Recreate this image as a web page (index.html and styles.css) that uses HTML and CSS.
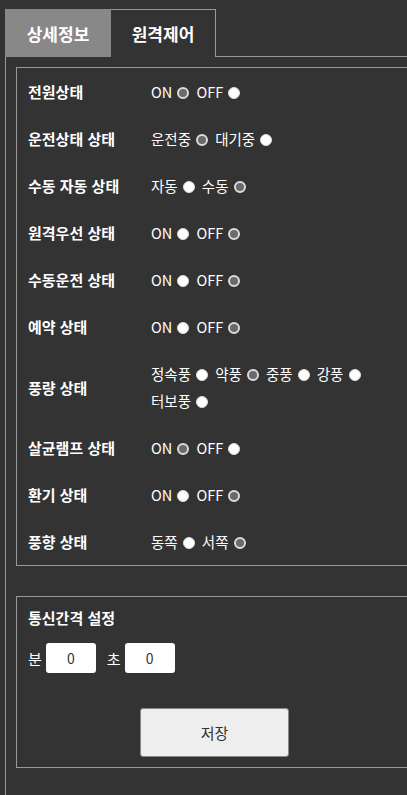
FILE: index.html
```html
<!DOCTYPE html>
<html lang="ko">
<head>
    <meta charset="UTF-8">
    <meta name="viewport" content="width=device-width, initial-scale=1.0">
    <title>원격제어</title>
    <link rel="stylesheet" href="styles.css">
</head>
<body>

<div id="tab-bar">
    <div class="tab">상세정보</div>
    <div class="tab active">원격제어</div>
    <div class="tab-rest"></div>
</div>

<div id="panel">
    <div class="box status-box">
        <div class="row">
            <div class="label">전원상태</div>
            <div class="value">
                <span class="opt">ON <input type="radio" name="power" checked></span>
                <span class="opt">OFF <input type="radio" name="power"></span>
            </div>
        </div>
        <div class="row">
            <div class="label">운전상태 상태</div>
            <div class="value">
                <span class="opt">운전중 <input type="radio" name="run" checked></span>
                <span class="opt">대기중 <input type="radio" name="run"></span>
            </div>
        </div>
        <div class="row">
            <div class="label">수동 자동 상태</div>
            <div class="value">
                <span class="opt">자동 <input type="radio" name="mode"></span>
                <span class="opt">수동 <input type="radio" name="mode" checked></span>
            </div>
        </div>
        <div class="row">
            <div class="label">원격우선 상태</div>
            <div class="value">
                <span class="opt">ON <input type="radio" name="remote"></span>
                <span class="opt">OFF <input type="radio" name="remote" checked></span>
            </div>
        </div>
        <div class="row">
            <div class="label">수동운전 상태</div>
            <div class="value">
                <span class="opt">ON <input type="radio" name="manual"></span>
                <span class="opt">OFF <input type="radio" name="manual" checked></span>
            </div>
        </div>
        <div class="row">
            <div class="label">예약 상태</div>
            <div class="value">
                <span class="opt">ON <input type="radio" name="reserve"></span>
                <span class="opt">OFF <input type="radio" name="reserve" checked></span>
            </div>
        </div>
        <div class="row">
            <div class="label">풍량 상태</div>
            <div class="value">
                <span class="opt">정속풍 <input type="radio" name="wind"></span>
                <span class="opt">약풍 <input type="radio" name="wind" checked></span>
                <span class="opt">중풍 <input type="radio" name="wind"></span>
                <span class="opt">강풍 <input type="radio" name="wind"></span>
                <span class="opt">터보풍 <input type="radio" name="wind"></span>
            </div>
        </div>
        <div class="row">
            <div class="label">살균램프 상태</div>
            <div class="value">
                <span class="opt">ON <input type="radio" name="lamp" checked></span>
                <span class="opt">OFF <input type="radio" name="lamp"></span>
            </div>
        </div>
        <div class="row">
            <div class="label">환기 상태</div>
            <div class="value">
                <span class="opt">ON <input type="radio" name="vent"></span>
                <span class="opt">OFF <input type="radio" name="vent" checked></span>
            </div>
        </div>
        <div class="row">
            <div class="label">풍향 상태</div>
            <div class="value">
                <span class="opt">동쪽 <input type="radio" name="dir"></span>
                <span class="opt">서쪽 <input type="radio" name="dir" checked></span>
            </div>
        </div>
    </div>

    <div class="box interval-box">
        <div class="label">통신간격 설정</div>
        <div class="interval-inputs">
            <span>분</span>
            <input type="text" class="num" value="0">
            <span class="sec">초</span>
            <input type="text" class="num" value="0">
        </div>
        <div class="save-area">
            <button class="save">저장</button>
        </div>
    </div>
</div>

</body>
</html>
```

FILE: styles.css
```css
:root {
    --page-bg: #333333;
    --line: #999999;
    --tab-off: #888888;
}

html {
    overflow: hidden;
}

body {
    margin: 0;
    padding: 9px 5px 0 5px;
    width: 419px;
    background-color: var(--page-bg);
    color: #ffffff;
    font-family: "Noto Sans CJK KR", "Noto Sans", sans-serif;
    font-size: 14px;
}

#tab-bar {
    display: flex;
    height: 48px;
}

.tab {
    display: flex;
    align-items: center;
    justify-content: center;
    font-size: 17px;
    font-weight: bold;
}

.tab:first-child {
    width: 106px;
    background-color: var(--tab-off);
}

.tab.active {
    width: 104px;
    border-top: 1px solid var(--line);
    border-right: 1px solid var(--line);
}

.tab-rest {
    flex: 1;
    border-bottom: 1px solid var(--line);
}

#panel {
    border-left: 1px solid var(--line);
    border-right: 1px solid var(--line);
    padding: 10px 10px 60px 10px;
}

.box {
    border: 1px solid var(--line);
}

.row {
    display: flex;
    align-items: center;
    padding: 10px 11px;
}

.label {
    width: 123px;
    flex-shrink: 0;
    font-size: 15px;
    font-weight: bold;
    line-height: 27px;
}

.value {
    flex: 1;
    line-height: 27px;
    font-size: 14.5px;
}

.opt {
    white-space: nowrap;
}

input[type="radio"] {
    appearance: none;
    -webkit-appearance: none;
    width: 12px;
    height: 12px;
    margin: 0 3px 0 1px;
    border-radius: 50%;
    background-color: #ffffff;
    border: 1px solid #dddddd;
    vertical-align: -1px;
}

input[type="radio"]:checked {
    background-color: #6a6a6a;
    border: 2px solid #dcdcdc;
}

.interval-box {
    margin-top: 30px;
    padding: 7px 11px 10px 11px;
}

.interval-inputs {
    display: flex;
    align-items: center;
    gap: 4px;
    margin-top: 12px;
    font-size: 15px;
}

.interval-inputs .sec {
    margin-left: 7px;
}

.num {
    width: 50px;
    height: 30px;
    box-sizing: border-box;
    border: none;
    border-radius: 3px;
    text-align: center;
    font-family: inherit;
    font-size: 14px;
    color: #333333;
    background-color: #ffffff;
    padding: 0;
}

.save-area {
    display: flex;
    justify-content: center;
    margin-top: 35px;
}

.save {
    width: 149px;
    height: 49px;
    background-color: #eeeeee;
    border: 1px solid #888888;
    border-radius: 3px;
    font-family: inherit;
    font-size: 15px;
    color: #333333;
}
```
